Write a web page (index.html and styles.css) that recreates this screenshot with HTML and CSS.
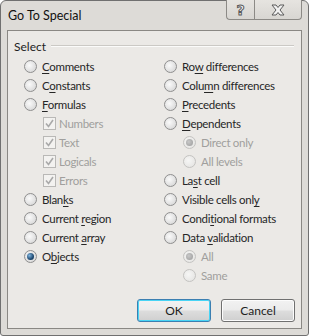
FILE: index.html
```html
<!DOCTYPE html>
<html lang="en">
<head>
    <meta charset="UTF-8">
    <title>Go To Special</title>
    <link rel="stylesheet" href="styles.css">
</head>
<body>
    <div class="window">
        <div class="titlebar">
            <div class="title">Go To Special</div>
            <div class="caption">
                <div class="cap-btn help">?</div>
                <div class="cap-btn close">
                    <svg width="14" height="12" viewBox="0 0 14 12">
                        <polygon points="1,1 5,1 7,3.5 9,1 13,1 9,6 13,11 9,11 7,8.5 5,11 1,11 5,6" fill="#f2f2f2" stroke="#5a5a5a" stroke-width="1"/>
                    </svg>
                </div>
            </div>
        </div>

        <div class="client">
            <div class="group-label">
                <span>Select</span>
                <div class="rule"></div>
            </div>

            <div class="options">
                <div class="col">
                    <div class="opt"><span class="radio"></span><span><u>C</u>omments</span></div>
                    <div class="opt"><span class="radio"></span><span>C<u>o</u>nstants</span></div>
                    <div class="opt"><span class="radio"></span><span><u>F</u>ormulas</span></div>
                    <div class="opt sub off"><span class="check"><svg width="11" height="11" viewBox="0 0 11 11"><polyline points="2,5.5 4.5,8.5 9,2" fill="none" stroke="#a9a9a9" stroke-width="1.6"/></svg></span><span>Numbers</span></div>
                    <div class="opt sub off"><span class="check"><svg width="11" height="11" viewBox="0 0 11 11"><polyline points="2,5.5 4.5,8.5 9,2" fill="none" stroke="#a9a9a9" stroke-width="1.6"/></svg></span><span>Text</span></div>
                    <div class="opt sub off"><span class="check"><svg width="11" height="11" viewBox="0 0 11 11"><polyline points="2,5.5 4.5,8.5 9,2" fill="none" stroke="#a9a9a9" stroke-width="1.6"/></svg></span><span>Logicals</span></div>
                    <div class="opt sub off"><span class="check"><svg width="11" height="11" viewBox="0 0 11 11"><polyline points="2,5.5 4.5,8.5 9,2" fill="none" stroke="#a9a9a9" stroke-width="1.6"/></svg></span><span>Errors</span></div>
                    <div class="opt"><span class="radio"></span><span>Blan<u>k</u>s</span></div>
                    <div class="opt"><span class="radio"></span><span>Current <u>r</u>egion</span></div>
                    <div class="opt"><span class="radio"></span><span>Current <u>a</u>rray</span></div>
                    <div class="opt"><span class="radio on"></span><span>O<u>b</u>jects</span></div>
                </div>
                <div class="col">
                    <div class="opt"><span class="radio"></span><span>Ro<u>w</u> differences</span></div>
                    <div class="opt"><span class="radio"></span><span>Colu<u>m</u>n differences</span></div>
                    <div class="opt"><span class="radio"></span><span><u>P</u>recedents</span></div>
                    <div class="opt"><span class="radio"></span><span><u>D</u>ependents</span></div>
                    <div class="opt sub off"><span class="radio on"></span><span>Direct only</span></div>
                    <div class="opt sub off"><span class="radio"></span><span>All levels</span></div>
                    <div class="opt"><span class="radio"></span><span>La<u>s</u>t cell</span></div>
                    <div class="opt"><span class="radio"></span><span>Visible cells onl<u>y</u></span></div>
                    <div class="opt"><span class="radio"></span><span>Condi<u>t</u>ional formats</span></div>
                    <div class="opt"><span class="radio"></span><span>Data <u>v</u>alidation</span></div>
                    <div class="opt sub off"><span class="radio on"></span><span>All</span></div>
                    <div class="opt sub off"><span class="radio"></span><span>Same</span></div>
                </div>
            </div>

            <div class="buttons">
                <button class="btn default">OK</button>
                <button class="btn">Cancel</button>
            </div>
        </div>
    </div>
</body>
</html>
```

FILE: styles.css
```css
body {
    margin: 0;
    font-family: Lato, "Noto Sans", sans-serif;
    font-size: 12px;
    color: #1e1e1e;
    background: #ffffff;
}

.window {
    width: 309px;
    height: 336px;
    box-sizing: border-box;
    border: 1px solid #707070;
    border-radius: 6px 6px 3px 3px;
    background: #dddbd7; /* frame */
    padding: 0 6px 6px;
    display: flex;
    flex-direction: column;
}

.titlebar {
    height: 29px;
    flex: none;
    display: flex;
    justify-content: space-between;
    align-items: flex-start;
}

.title {
    padding: 7px 0 0 1px;
    line-height: 16px;
    font-size: 12.5px;
    color: #111;
}

.caption {
    display: flex;
    margin-top: -1px;
}

.cap-btn {
    height: 20px;
    box-sizing: border-box;
    border: 1px solid #8c8a86;
    border-top: none;
    background: linear-gradient(#e6e4e0, #d8d6d2);
    display: flex;
    align-items: center;
    justify-content: center;
}

.help {
    width: 28px;
    border-right: none;
    border-bottom-left-radius: 4px;
    font-family: "DejaVu Sans", sans-serif;
    font-weight: bold;
    font-size: 14px;
    color: #f2f2f2;
    -webkit-text-stroke: 1px #5a5a5a;
}

.close {
    width: 48px;
    border-bottom-right-radius: 4px;
}

.client {
    flex: 1;
    border: 1px solid #8a8884;
    background: #ebe9e6;
    display: flex;
    flex-direction: column;
    padding: 7px 6px 6px 6px;
}

.group-label {
    display: flex;
    align-items: center;
    height: 16px;
    gap: 5px;
    padding-right: 1px;
}

.rule {
    flex: 1;
    height: 0;
    border-top: 1px solid #cbc9c5;
    border-bottom: 1px solid #fbfbfa;
}

.options {
    flex: 1;
    display: grid;
    grid-template-columns: 140px 1fr;
    padding: 3px 0 0 10px;
    font-size: 11.5px;
    letter-spacing: -0.3px;
    color: #262626;
}

.opt {
    height: 19px;
    display: flex;
    align-items: center;
    gap: 5px;
    white-space: nowrap;
}

.opt u {
    text-underline-offset: 2px;
}

.sub {
    padding-left: 19px;
}

.off {
    color: #a09f9d;
}

.radio {
    width: 13px;
    height: 13px;
    box-sizing: border-box;
    border-radius: 50%;
    border: 1px solid #8f8f8f;
    background: radial-gradient(circle at 40% 40%, #fafafa, #d0d0d0);
    display: flex;
    align-items: center;
    justify-content: center;
    flex: none;
}

.radio.on::after {
    content: "";
    width: 7px;
    height: 7px;
    border-radius: 50%;
    background: radial-gradient(circle at 35% 35%, #7fb3dd, #1f4a72 60%, #0e2a45);
}

.off .radio {
    border-color: #c4c3c1;
    background: radial-gradient(circle at 40% 40%, #f6f6f5, #e2e1df);
}

.off .radio.on::after {
    background: radial-gradient(circle at 40% 40%, #c8c8c8, #9a9a9a);
}

.check {
    width: 13px;
    height: 13px;
    box-sizing: border-box;
    border: 1px solid #b9b8b6;
    background: #f3f2f0;
    display: flex;
    align-items: center;
    justify-content: center;
    flex: none;
    margin-right: -2px;
}

.buttons {
    display: flex;
    justify-content: flex-end;
    gap: 10px;
}

.btn {
    width: 74px;
    height: 23px;
    font-family: inherit;
    font-size: 12px;
    color: #1e1e1e;
    border: 1px solid #707070;
    border-radius: 3px;
    background: linear-gradient(#f2f2f2 0%, #ebebeb 48%, #dddddd 52%, #cfcfcf 100%);
    box-shadow: inset 0 0 0 1px #fcfcfc;
    padding: 0;
}

.btn.default {
    border-color: #3c7fb1;
    box-shadow: inset 0 0 0 1px #48d4f5;
}
```
